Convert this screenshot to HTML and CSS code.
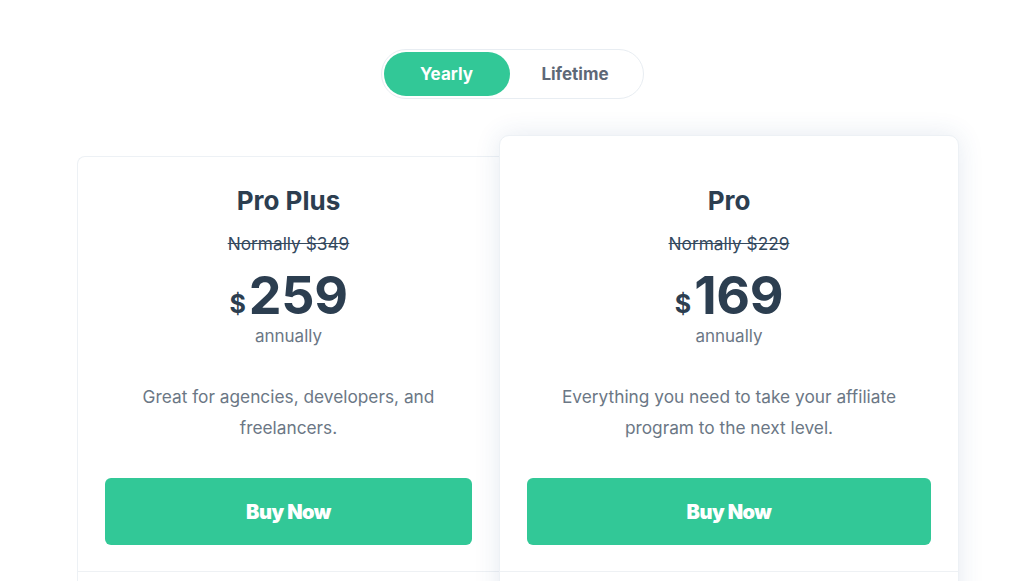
FILE: index.html
```html
<!DOCTYPE html>
<html lang="en">
<head>
<meta charset="utf-8">
<title>Pricing</title>
<link rel="stylesheet" href="styles.css">
</head>
<body>
<main class="page">
  <div class="toggle-wrap">
    <div class="toggle">
      <button class="toggle-btn active">Yearly</button>
      <button class="toggle-btn">Lifetime</button>
    </div>
  </div>
  <section class="plans">
    <article class="card card-side">
      <h2 class="plan-name">Pro Plus</h2>
      <p class="normal-price">Normally $349</p>
      <div class="price"><span class="currency">$</span><span class="amount">259</span></div>
      <p class="period">annually</p>
      <p class="desc">Great for agencies, developers, and freelancers.</p>
      <a class="buy" href="#">Buy Now</a>
      <div class="features"></div>
    </article>
    <article class="card card-featured">
      <h2 class="plan-name">Pro</h2>
      <p class="normal-price">Normally $229</p>
      <div class="price"><span class="currency">$</span><span class="amount">169</span></div>
      <p class="period">annually</p>
      <p class="desc">Everything you need to take your affiliate program to the next level.</p>
      <a class="buy" href="#">Buy Now</a>
      <div class="features"></div>
    </article>
  </section>
</main>
</body>
</html>
```
FILE: styles.css
```css
* { box-sizing: border-box; }
html, body { margin: 0; padding: 0; background: #ffffff; }
body {
  font-family: Inter, "Noto Sans", sans-serif;
  color: #2c3e50;
  overflow: hidden;
  height: 581px;
}
.page { padding-top: 49px; }
.toggle-wrap { display: flex; justify-content: center; }
.toggle {
  display: flex;
  width: 263px;
  height: 50px;
  padding: 2px;
  border: 1px solid #e8edf2;
  border-radius: 25px;
  background: #fff;
}
.toggle-btn {
  border: 0;
  background: transparent;
  font-family: Inter, sans-serif;
  font-weight: 700;
  font-size: 17px;
  color: #5d6877;
  border-radius: 22px;
  height: 44px;
  flex: 1 1 0;
  padding: 0;
  cursor: pointer;
}
.toggle-btn.active {
  flex: 0 0 126px;
  background: #32c897;
  color: #fff;
}
.plans {
  display: flex;
  align-items: flex-start;
  padding-left: 77px;
  margin-top: 36px;
}
.card {
  background: #fff;
  border: 1px solid #edf1f5;
  text-align: center;
  padding: 28px 27px 0;
}
.card-side {
  width: 422px;
  margin-top: 21px;
  border-radius: 8px 0 0 0;
  border-right: 0;
}
.card-featured {
  width: 460px;
  padding-top: 49px;
  border-radius: 10px;
  position: relative;
  z-index: 1;
  box-shadow: 0 0 26px rgba(40, 80, 140, 0.12);
}
.plan-name {
  margin: 0;
  font-size: 26px;
  line-height: 32px;
  font-weight: 700;
  color: #2c3e50;
}
.normal-price {
  margin: 15px 0 0;
  font-size: 17.3px;
  line-height: 24px;
  color: #34495e;
  text-decoration: line-through;
}
.price {
  margin-top: 14px;
  display: flex;
  justify-content: center;
  align-items: baseline;
  color: #2c3e50;
}
.currency {
  font-size: 25px;
  font-weight: 700;
  margin-right: 3px;
  position: relative;
  top: -1px;
}
.amount {
  font-size: 52px;
  line-height: 52px;
  font-weight: 700;
  letter-spacing: -0.3px;
}
.period {
  margin: 2px 0 0;
  font-size: 17px;
  line-height: 24px;
  color: #6b7785;
}
.desc {
  margin: 33px auto 0;
  max-width: 370px;
  font-size: 17.3px;
  line-height: 31px;
  color: #6b7785;
}
.buy {
  display: flex;
  align-items: center;
  justify-content: center;
  margin-top: 35px;
  height: 67px;
  border-radius: 6px;
  background: #32c897;
  color: #fff;
  font-size: 20px;
  font-weight: 900;
  letter-spacing: -0.5px;
  text-decoration: none;
}
.features {
  margin: 26px -27px 0;
  border-top: 1px solid #eef1f4;
  height: 200px;
}
```
